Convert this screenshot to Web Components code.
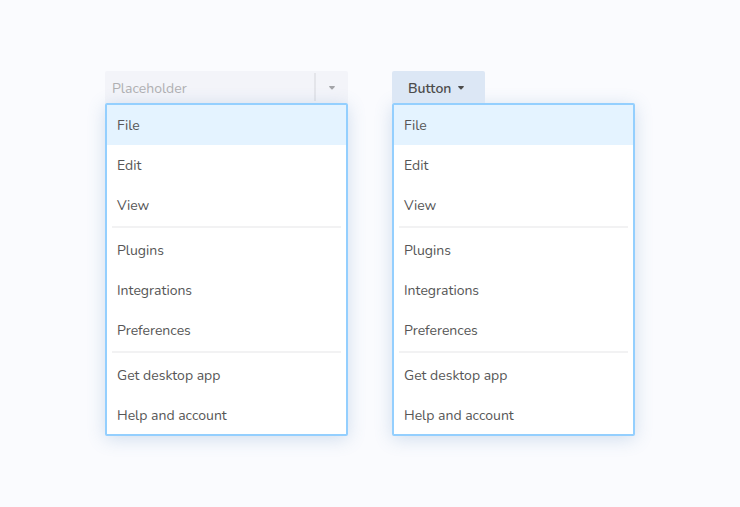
<!DOCTYPE html>
<html lang="en">
<head>
<meta charset="utf-8">
<meta name="viewport" content="width=device-width, initial-scale=1">
<title>Dropdown menus</title>
<style>
  body { margin: 0; min-height: 100vh; background: #fafbfe; color: #565656; font: 14px/20px Nunito, Lato, sans-serif; }
</style>
</head>
<body>
<menu-showcase>
  <menu-field label="Placeholder"><app-menu></app-menu></menu-field>
  <menu-button label="Button"><app-menu></app-menu></menu-button>
</menu-showcase>

<template id="showcase">
  <style>
    :host { display: grid; grid-template-columns: repeat(2, minmax(0, 243px)); justify-content: center; gap: 44px; padding: 71px 16px; }
  </style>
  <slot></slot>
</template>

<template id="field">
  <style>
    :host { display: block; }
    .field { display: flex; height: 32px; background: #f3f4f9; border-radius: 2px 2px 0 0; }
    input { flex: 1; min-width: 0; border: 0; outline: 0; padding: 4px 7px 0; background: none; font: inherit; color: inherit; }
    input::placeholder { color: #b0b0b2; opacity: 1; }
    i { width: 2px; margin: 2px 0; background: #e4e5ea; }
    button { width: 32px; border: 0; padding: 2px 0 0; background: none; color: #a3a4a8; display: grid; place-items: center; }
    svg { display: block; fill: currentColor; }
  </style>
  <div class="field">
    <input type="text" id="box" autocomplete="off">
    <i></i>
    <button type="button" aria-label="Toggle menu" aria-expanded="true"><svg width="6" height="4" viewBox="0 0 6 4"><path d="M.7 0h4.6c.6 0 .8.6.4 1L3.6 3.2a.8.8 0 0 1-1.2 0L.3 1C-.1.6.1 0 .7 0Z"/></svg></button>
  </div>
  <slot></slot>
</template>

<template id="trigger">
  <style>
    :host { display: flex; flex-direction: column; align-items: stretch; }
    button { align-self: flex-start; position: relative; z-index: 1; display: flex; align-items: center; gap: 7px; height: 32px; border: 0; border-radius: 2px 2px 0 0; padding: 2px 21px 0 16px; background: #dce7f5; color: #4c4c4c; font: inherit; font-weight: 600; }
    span { padding-top: 2px; }
    svg { display: block; fill: currentColor; }
  </style>
  <button type="button" aria-haspopup="menu" aria-expanded="true"><span></span><svg width="6" height="4" viewBox="0 0 6 4"><path d="M.7 0h4.6c.6 0 .8.6.4 1L3.6 3.2a.8.8 0 0 1-1.2 0L.3 1C-.1.6.1 0 .7 0Z"/></svg></button>
  <slot></slot>
</template>

<template id="menu">
  <style>
    :host { display: block; position: relative; box-sizing: border-box; border: 2px solid #94cffe; border-radius: 2px; background: #fff; box-shadow: 0 3px 18px rgba(80, 130, 185, .24); }
    .list { display: flex; flex-direction: column; margin-bottom: -1px; }
    hr { width: auto; height: 2px; border: 0; margin: 1px 5px 2px; background: #f2f2f3; }
  </style>
  <div class="list" role="menu">
    <menu-item active>File</menu-item>
    <menu-item>Edit</menu-item>
    <menu-item>View</menu-item>
    <hr>
    <menu-item>Plugins</menu-item>
    <menu-item>Integrations</menu-item>
    <menu-item>Preferences</menu-item>
    <hr>
    <menu-item>Get desktop app</menu-item>
    <menu-item>Help and account</menu-item>
  </div>
</template>

<template id="item">
  <style>
    :host { display: block; }
    button { display: block; width: 100%; height: 40px; border: 0; padding: 2px 10px 0; background: none; color: inherit; font: inherit; text-align: left; }
    :host([active]) button { background: #e4f3ff; }
  </style>
  <button type="button" role="menuitem"><slot></slot></button>
</template>

<script>
  class TemplateElement extends HTMLElement {
    constructor() {
      super();
      const template = document.getElementById(this.constructor.template);
      this.attachShadow({ mode: 'open' }).append(template.content.cloneNode(true));
    }
  }
  customElements.define('menu-showcase', class extends TemplateElement { static template = 'showcase'; });
  customElements.define('menu-item', class extends TemplateElement { static template = 'item'; });
  customElements.define('app-menu', class extends TemplateElement { static template = 'menu'; });
  customElements.define('menu-field', class extends TemplateElement {
    static template = 'field';
    connectedCallback() {
      const input = this.shadowRoot.querySelector('input');
      input.placeholder = this.getAttribute('label');
      input.setAttribute('aria-label', this.getAttribute('label'));
    }
  });
  customElements.define('menu-button', class extends TemplateElement {
    static template = 'trigger';
    connectedCallback() {
      this.shadowRoot.querySelector('span').textContent = this.getAttribute('label');
    }
  });
</script>
</body>
</html>
